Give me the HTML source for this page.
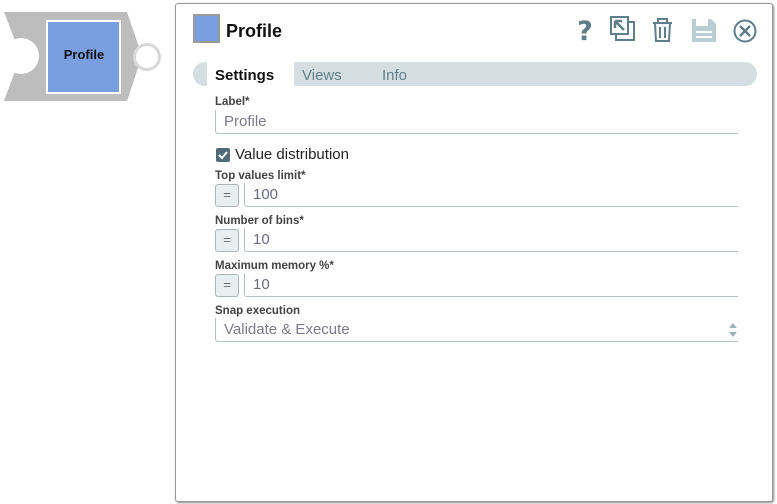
<!DOCTYPE html>
<html><head><style>
body{margin:0;width:777px;height:504px;background:#fff;position:relative;overflow:hidden;font-family:"Liberation Sans",sans-serif}
.a{position:absolute}
.lbl{position:absolute;left:215px;font-size:11.5px;font-weight:bold;color:#444}
.inp{position:absolute;left:215px;width:522px;height:23px;border-left:1px solid #b5c0c4;border-bottom:1px solid #b5c0c4;border-radius:0 0 0 3px}
.inp span{position:absolute;left:8px;top:3px;font-size:15px;color:#7a7a8a}
.btn{position:absolute;left:215px;width:22px;height:21px;background:#e8eff1;border:1px solid #aab5b8;border-radius:3px;text-align:center;font-size:13px;line-height:20px;color:#666}
.inp2{position:absolute;left:244px;width:493px;height:23px;border-left:1px solid #b5c0c4;border-bottom:1px solid #b5c0c4;border-radius:0 0 0 3px}
.inp2 span{position:absolute;left:8px;top:3px;font-size:15px;color:#6a6a80}
</style></head><body>
<svg class="a" style="left:0;top:0" width="170" height="110">
<polygon points="4,12 127,12 142,56 127,101 4,101 14,74 14,38" fill="#bdbdbd"/>
<circle cx="21" cy="56" r="18" fill="#fff"/>
<rect x="47" y="21" width="73" height="72" fill="#7a9fe0" stroke="#fff" stroke-width="2"/>
<text x="84" y="59" text-anchor="middle" font-family="Liberation Sans" font-weight="bold" font-size="13" fill="#111">Profile</text>
<circle cx="147" cy="57" r="12.5" fill="#fff" stroke="#d8d8d8" stroke-width="3"/>
</svg>
<div class="a" style="left:175px;top:3px;width:596px;height:497px;border:1px solid #999;border-radius:3px;box-shadow:1px 1px 2px #888;background:#fff"></div>
<div class="a" style="left:193px;top:14px;width:23px;height:25px;background:#7a9fe0;border:2px solid #999"></div>
<div class="a" style="left:226px;top:21px;font-size:18px;font-weight:bold;color:#111">Profile</div>
<svg class="a" style="left:570px;top:12px" width="200" height="36">
<text x="15" y="28" text-anchor="middle" font-family="DejaVu Sans" font-weight="bold" font-size="27" fill="#5e7f8a">?</text>
<g fill="none" stroke="#5e7f8a" stroke-width="2">
<rect x="41" y="5" width="17" height="17"/><polyline points="59,10 64,10 64,28 46,28 46,23"/>
<path d="M45,9 L54,18 M45,9 L45,16 M45,9 L52,9" stroke-width="2.5"/>
<path d="M83,11 L102,11 M88,11 L88,7 L97,7 L97,11 M85,11 L86,29 L99,29 L100,11 M90,15 L90,26 M95,15 L95,26"/>
<circle cx="175" cy="19" r="10.5"/><path d="M170,14 L180,24 M180,14 L170,24" stroke-width="2.5"/>
</g>
<path d="M122,7 L141,7 L146,12 L146,30 L122,30 Z" fill="#b9cdd3"/>
<rect x="126" y="7" width="12" height="7" fill="#fff"/><rect x="126" y="19" width="16" height="2" fill="#fff"/><rect x="126" y="24" width="16" height="2" fill="#fff"/>
</svg>
<div class="a" style="left:193px;top:62px;width:564px;height:24px;background:#d5dfe2;border-radius:12px"></div>
<div class="a" style="left:207px;top:62px;width:87px;height:24px;background:#fff"></div>
<div class="a" style="left:215px;top:67px;font-size:15px;font-weight:bold;color:#111">Settings</div>
<div class="a" style="left:302px;top:67px;font-size:15px;color:#5e7f8a">Views</div>
<div class="a" style="left:382px;top:67px;font-size:15px;color:#5e7f8a">Info</div>
<div class="lbl" style="top:96px">Label*</div>
<div class="inp" style="top:110px"><span>Profile</span></div>
<div class="a" style="left:216px;top:148px;width:14px;height:14px;background:#4f6b75;border-radius:2px"></div>
<svg class="a" style="left:216px;top:148px" width="14" height="14"><polyline points="3,7 6,10 11,4" fill="none" stroke="#fff" stroke-width="2"/></svg>
<div class="a" style="left:235px;top:146px;font-size:15px;color:#222">Value distribution</div>
<div class="lbl" style="top:170px">Top values limit*</div>
<div class="btn" style="top:184px">=</div><div class="inp2" style="top:183px"><span>100</span></div>
<div class="lbl" style="top:215px">Number of bins*</div>
<div class="btn" style="top:229px">=</div><div class="inp2" style="top:228px"><span>10</span></div>
<div class="lbl" style="top:260px">Maximum memory %*</div>
<div class="btn" style="top:274px">=</div><div class="inp2" style="top:273px"><span>10</span></div>
<div class="lbl" style="top:305px">Snap execution</div>
<div class="inp" style="top:318px"><span>Validate &amp; Execute</span></div>
<svg class="a" style="left:728px;top:322px" width="10" height="16"><polygon points="5,1 9,6 1,6" fill="#9fb3b9"/><polygon points="1,10 9,10 5,15" fill="#9fb3b9"/></svg>
</body></html>
